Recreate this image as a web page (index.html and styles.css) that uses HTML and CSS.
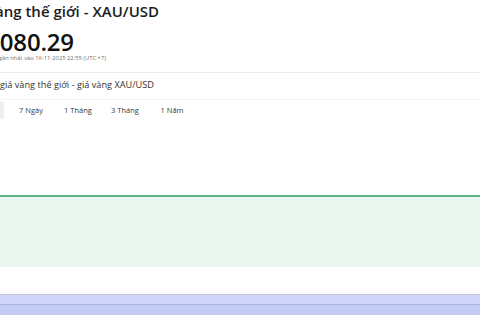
FILE: index.html
```html
<!DOCTYPE html>
<html lang="vi">
<head>
    <meta charset="UTF-8">
    <meta name="viewport" content="width=device-width, initial-scale=1.0">
    <title>Giá vàng thế giới - XAU/USD</title>
    <link rel="stylesheet" href="styles.css">
</head>
<body>
    <!-- a pagina esta cortada na esquerda, por isso as margens negativas -->
    <div class="pagina">
        <h1 class="titulo">Giá vàng thế giới - XAU/USD</h1>
        <div class="preco">4,080.29</div>
        <p class="atualizado">Cập nhật gần nhất vào 16-11-2025 22:55 (UTC +7)</p>
    </div>

    <div class="grafico">
        <h2 class="grafico-titulo"><span>Biểu đồ giá vàng thế giới - giá vàng XAU/USD</span></h2>

        <div class="abas">
            <button class="aba ativa">1 Ngày</button>
            <button class="aba">7 Ngày</button>
            <button class="aba">1 Tháng</button>
            <button class="aba">3 Tháng</button>
            <button class="aba">1 Năm</button>
        </div>

        <div class="area">
            <div class="linha-area"></div>
        </div>

        <div class="navegador">
            <div class="nav-topo"></div>
            <div class="nav-baixo"></div>
        </div>
    </div>
</body>
</html>
```

FILE: styles.css
```css
* {
  padding: 0;
  margin: 0;
  box-sizing: border-box;
}

body {
  background-color: #ffffff;
  color: #1b1b1b;
  font-family: "Open Sans", Arial, sans-serif;
  width: 480px;
  height: 320px;
  overflow: hidden;
}

.pagina {
  padding-top: 1px;
}

.titulo {
  margin-left: -40.7px;
  font-size: 15px;
  font-weight: 600;
  line-height: 20px;
  color: #1c1c1c;
}

.preco {
  margin-top: 9px;
  margin-left: -20px;
  font-size: 24px;
  font-weight: 600;
  line-height: 23px;
  color: #111111;
  letter-spacing: -0.2px;
}

.atualizado {
  margin-top: 1px;
  margin-left: -27px;
  font-size: 5.8px;
  line-height: 8px;
  color: #6f6f6f;
}

.grafico {
  margin-top: 10px;
  border-top: 1px solid #ececec;
}

.grafico-titulo {
  height: 27px;
  display: flex;
  align-items: center;
  margin-left: -35px;
  padding-bottom: 3px;
  font-size: 9.2px;
  font-weight: normal;
  color: #333333;
  border-bottom: 1px solid #f4f4f4;
}

.abas {
  display: flex;
  gap: 7px;
  margin-left: -36px;
  margin-top: 1px;
}

.aba {
  width: 40px;
  height: 18px;
  border: none;
  border-radius: 3px;
  background: none;
  font-family: "Open Sans", Arial, sans-serif;
  font-size: 7.5px;
  color: #3a3a3a;
}

.aba.ativa {
  background-color: #efefef;
}

.area {
  margin-top: 76px;
  height: 72px;
  background-color: #ecf6f0;
}

.linha-area {
  height: 2px;
  background-color: #5fb48d;
}

.navegador {
  margin-top: 27px;
  border-top: 1px solid #c4c4d4;
}

.nav-topo {
  height: 10px;
  background-color: #d1d6fb;
  border-bottom: 1px solid #a9b5e0;
}

.nav-baixo {
  height: 10px;
  background-color: #c6cdf4;
}
```
